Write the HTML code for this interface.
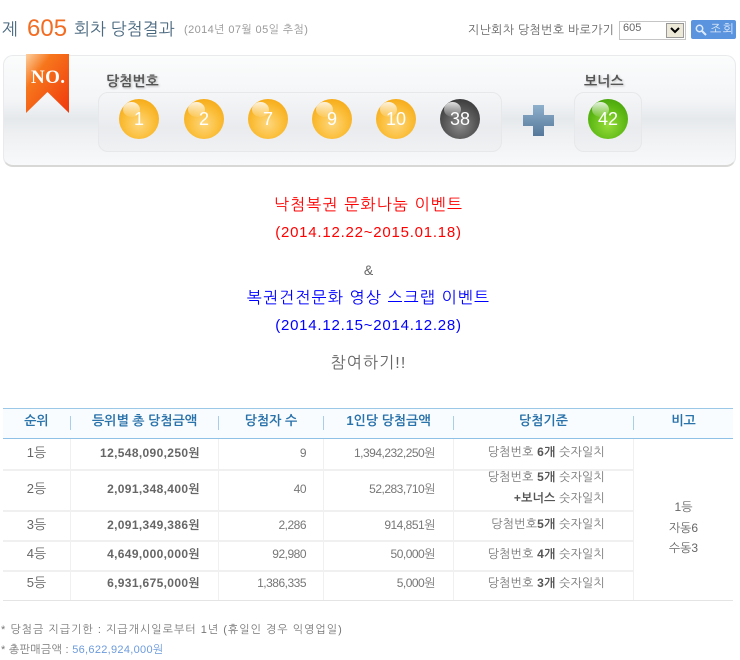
<!DOCTYPE html>
<html lang="ko">
<head>
<meta charset="utf-8">
<title>605 회차 당첨결과</title>
<style>
html,body{margin:0;padding:0;background:#fff}
body{position:relative;width:740px;height:658px;overflow:hidden;font-family:"Liberation Sans","NanumGothic","Noto Sans CJK KR",sans-serif;color:#666;font-size:12px}
.a{position:absolute;white-space:nowrap}
.panel{position:absolute;left:3px;top:55px;width:731px;height:109px;border:1px solid #e8eaec;border-bottom:2px solid #d8d8d6;border-radius:10px;background:linear-gradient(#fbfcfc 0,#f3f5f7 40%,#e6e9ec 58%,#eef0f2 72%,#f8f9fa 100%)}
.box{position:absolute;top:92px;height:58px;border:1px solid #e6e8ea;border-radius:10px;background:linear-gradient(#f5f6f8,#e9ebee 60%,#eff1f3)}
.ball{position:absolute;top:99px;width:40px;height:40px;border-radius:50%;text-align:center;color:#fff;font:18px/40px "Liberation Sans",sans-serif;overflow:hidden}
.ball:before{content:"";position:absolute;left:4px;top:3px;width:17px;height:15px;border-radius:50%;background:linear-gradient(rgba(255,255,255,.85),rgba(255,255,255,.1))}
.ball span{position:relative}
.o{background:radial-gradient(circle at 50% 62%,#fdd77e 0,#fbbf3c 45%,#f5a811 85%,#f8b520 100%)}
.k{background:radial-gradient(circle at 50% 65%,#8a8a8a 0,#555 50%,#333 90%)}
.g{background:radial-gradient(circle at 50% 65%,#96dc3a 0,#5db814 55%,#3f9c08 95%)}
.lbl{font-weight:bold;font-size:14px;color:#555;text-shadow:1px 1px 2px #bbb}
.ln{position:absolute;background:#f0f0f0}
.th{position:absolute;top:411px;height:20px;line-height:20px;text-align:center;font-weight:bold;font-size:13px;color:#2a72aa}
.c{position:absolute;text-align:center;font-size:13px;color:#666;line-height:20px;height:20px}
.r{position:absolute;text-align:right;font-size:12px;color:#777;line-height:20px;height:20px;letter-spacing:-.5px}
.m{position:absolute;left:71px;width:129px;text-align:right;font-weight:bold;font-size:12px;color:#666;line-height:20px;height:20px;letter-spacing:.35px}
.t{position:absolute;left:454px;width:151px;text-align:right;font-size:12px;color:#777;line-height:20px;height:20px;letter-spacing:.2px}
.t b{color:#555}
.ev{position:absolute;left:0;width:737px;text-align:center;font-size:16px;line-height:20px;letter-spacing:1.15px}
.dt{font-size:15px;letter-spacing:.77px}
.tk{position:absolute;top:416px;width:1px;height:14px;background:#a9cfe8}
</style>
</head>
<body>
<div class="a" style="left:2px;top:18px;font-size:17px;line-height:24px;color:#4b6a80">제</div>
<div class="a" style="left:27px;top:15px;font-size:24px;line-height:28px;color:#f26c22">605</div>
<div class="a" style="left:74px;top:18px;font-size:17px;line-height:24px;color:#4b6a80">회차 당첨결과</div>
<div class="a" style="left:184px;top:21px;font-size:11px;line-height:18px;color:#999;letter-spacing:.4px">(2014년 07월 05일 추첨)</div>

<div class="a" style="left:468px;top:20px;font-size:12px;line-height:20px;color:#666;letter-spacing:.3px">지난회차 당첨번호 바로가기</div>
<div class="a" style="left:619px;top:21px;width:65px;height:17px;border:1px solid #c5c5c5;background:#fff;font-size:11px;line-height:13px;color:#666;text-indent:3px">605
  <div style="position:absolute;right:1px;top:1px;width:18px;height:15px;background:#ece9d8;border:1px solid #999;box-sizing:border-box">
    <svg width="16" height="13" style="position:absolute;left:0;top:0"><path d="M4 4l4 4 4-4" fill="none" stroke="#000" stroke-width="2"/></svg>
  </div>
</div>
<div class="a" style="left:691px;top:20px;width:45px;height:19px;background:#5b94de;border-radius:2px;color:#dbe9fa;font-size:12px;line-height:19px;text-indent:19px;letter-spacing:1.5px">조회
  <svg width="14" height="14" style="position:absolute;left:3px;top:3px"><circle cx="5.500" cy="5.500" r="3.200" fill="none" stroke="#dbe9fa" stroke-width="1.500"/><path d="M8 8l4 4" stroke="#dbe9fa" stroke-width="2"/></svg>
</div>

<div class="panel"></div>
<svg class="a" style="left:26px;top:54px" width="43" height="59">
  <defs><linearGradient id="rb" x1="0" y1="0" x2="1" y2="1"><stop offset="0" stop-color="#fdd0a0"/><stop offset=".3" stop-color="#f6761c"/><stop offset="1" stop-color="#f0380c"/></linearGradient></defs>
  <path d="M0 0H43V59L21.500 38 0 59Z" fill="url(#rb)"/>
  <text x="5" y="29" font-family="Liberation Serif" font-weight="bold" font-size="19" textLength="34" fill="#fff">NO.</text>
</svg>

<div class="a lbl" style="left:106px;top:71px;line-height:20px">당첨번호</div>
<div class="a lbl" style="left:584px;top:71px;line-height:20px">보너스</div>
<div class="box" style="left:98px;width:402px"></div>
<div class="box" style="left:574px;width:66px"></div>
<div class="ball o" style="left:119px"><span>1</span></div>
<div class="ball o" style="left:184px"><span>2</span></div>
<div class="ball o" style="left:248px"><span>7</span></div>
<div class="ball o" style="left:312px"><span>9</span></div>
<div class="ball o" style="left:376px"><span>10</span></div>
<div class="ball k" style="left:440px"><span>38</span></div>
<div class="ball g" style="left:588px"><span>42</span></div>
<svg class="a" style="left:523px;top:105px" width="31" height="31">
  <defs><linearGradient id="pl" x1="0" y1="0" x2="0" y2="1"><stop offset="0" stop-color="#8fb0cc"/><stop offset="1" stop-color="#55789a"/></linearGradient></defs>
  <path d="M10 0H21V10H31V21H21V31H10V21H0V10H10Z" fill="url(#pl)"/>
</svg>

<div class="ev" style="top:196px;color:#f00">낙첨복권 문화나눔 이벤트</div>
<div class="ev dt" style="top:223px;color:#f00">(2014.12.22~2015.01.18)</div>
<div class="ev" style="top:260px;color:#666;font-size:14px;letter-spacing:0">&amp;</div>
<div class="ev" style="top:289px;color:#00f">복권건전문화 영상 스크랩 이벤트</div>
<div class="ev dt" style="top:316px;color:#00f">(2014.12.15~2014.12.28)</div>
<div class="ev" style="top:354px;color:#666">참여하기!!</div>

<div class="a" style="left:3px;top:408px;width:730px;height:30px;background:#f8fcff"></div>
<div class="ln" style="left:3px;top:408px;width:730px;height:1px;background:#9cc8e8"></div>
<div class="ln" style="left:3px;top:438px;width:730px;height:1px;background:#8fc0e6"></div>
<div class="tk" style="left:70px"></div>
<div class="tk" style="left:218px"></div>
<div class="tk" style="left:323px"></div>
<div class="tk" style="left:453px"></div>
<div class="tk" style="left:633px"></div>
<div class="th" style="left:3px;width:67px">순위</div>
<div class="th" style="left:71px;width:147px">등위별 총 당첨금액</div>
<div class="th" style="left:219px;width:104px">당첨자 수</div>
<div class="th" style="left:324px;width:129px">1인당 당첨금액</div>
<div class="th" style="left:454px;width:179px">당첨기준</div>
<div class="th" style="left:634px;width:99px">비고</div>

<div class="ln" style="left:3px;top:469px;width:630px;height:2px"></div>
<div class="ln" style="left:3px;top:510px;width:630px;height:2px"></div>
<div class="ln" style="left:3px;top:540px;width:630px;height:2px"></div>
<div class="ln" style="left:3px;top:570px;width:630px;height:2px"></div>
<div class="ln" style="left:3px;top:600px;width:730px;height:1px;background:#e4e4e4"></div>
<div class="ln" style="left:70px;top:439px;width:1px;height:161px"></div>
<div class="ln" style="left:218px;top:439px;width:1px;height:161px"></div>
<div class="ln" style="left:323px;top:439px;width:1px;height:161px"></div>
<div class="ln" style="left:453px;top:439px;width:1px;height:161px"></div>
<div class="ln" style="left:633px;top:439px;width:1px;height:161px"></div>

<div class="c" style="left:3px;width:67px;top:443px">1등</div>
<div class="c" style="left:3px;width:67px;top:479px">2등</div>
<div class="c" style="left:3px;width:67px;top:515px">3등</div>
<div class="c" style="left:3px;width:67px;top:544px">4등</div>
<div class="c" style="left:3px;width:67px;top:573px">5등</div>

<div class="m" style="top:443px">12,548,090,250원</div>
<div class="m" style="top:479px">2,091,348,400원</div>
<div class="m" style="top:515px">2,091,349,386원</div>
<div class="m" style="top:544px">4,649,000,000원</div>
<div class="m" style="top:573px">6,931,675,000원</div>

<div class="r" style="left:219px;width:87px;top:443px">9</div>
<div class="r" style="left:219px;width:87px;top:479px">40</div>
<div class="r" style="left:219px;width:87px;top:515px">2,286</div>
<div class="r" style="left:219px;width:87px;top:544px">92,980</div>
<div class="r" style="left:219px;width:87px;top:573px">1,386,335</div>

<div class="r" style="left:324px;width:111px;top:443px">1,394,232,250원</div>
<div class="r" style="left:324px;width:111px;top:479px">52,283,710원</div>
<div class="r" style="left:324px;width:111px;top:515px">914,851원</div>
<div class="r" style="left:324px;width:111px;top:544px">50,000원</div>
<div class="r" style="left:324px;width:111px;top:573px">5,000원</div>

<div class="t" style="top:442px">당첨번호 <b>6개</b> 숫자일치</div>
<div class="t" style="top:467px">당첨번호 <b>5개</b> 숫자일치</div>
<div class="t" style="top:488px"><b>+보너스</b> 숫자일치</div>
<div class="t" style="top:514px">당첨번호<b>5개</b> 숫자일치</div>
<div class="t" style="top:544px">당첨번호 <b>4개</b> 숫자일치</div>
<div class="t" style="top:573px">당첨번호 <b>3개</b> 숫자일치</div>

<div class="c" style="left:634px;width:99px;top:497px;font-size:12px">1등</div>
<div class="c" style="left:634px;width:99px;top:518px;font-size:12px">자동6</div>
<div class="c" style="left:634px;width:99px;top:538px;font-size:12px">수동3</div>

<div class="a" style="left:1px;top:620px;font-size:11px;line-height:20px;color:#777;letter-spacing:1px">* 당첨금 지급기한 : 지급개시일로부터 1년 (휴일인 경우 익영업일)</div>
<div class="a" style="left:1px;top:640px;font-size:11px;line-height:20px;color:#777;letter-spacing:.3px">* 총판매금액 : <span style="color:#6c9bdc">56,622,924,000원</span></div>
</body>
</html>
